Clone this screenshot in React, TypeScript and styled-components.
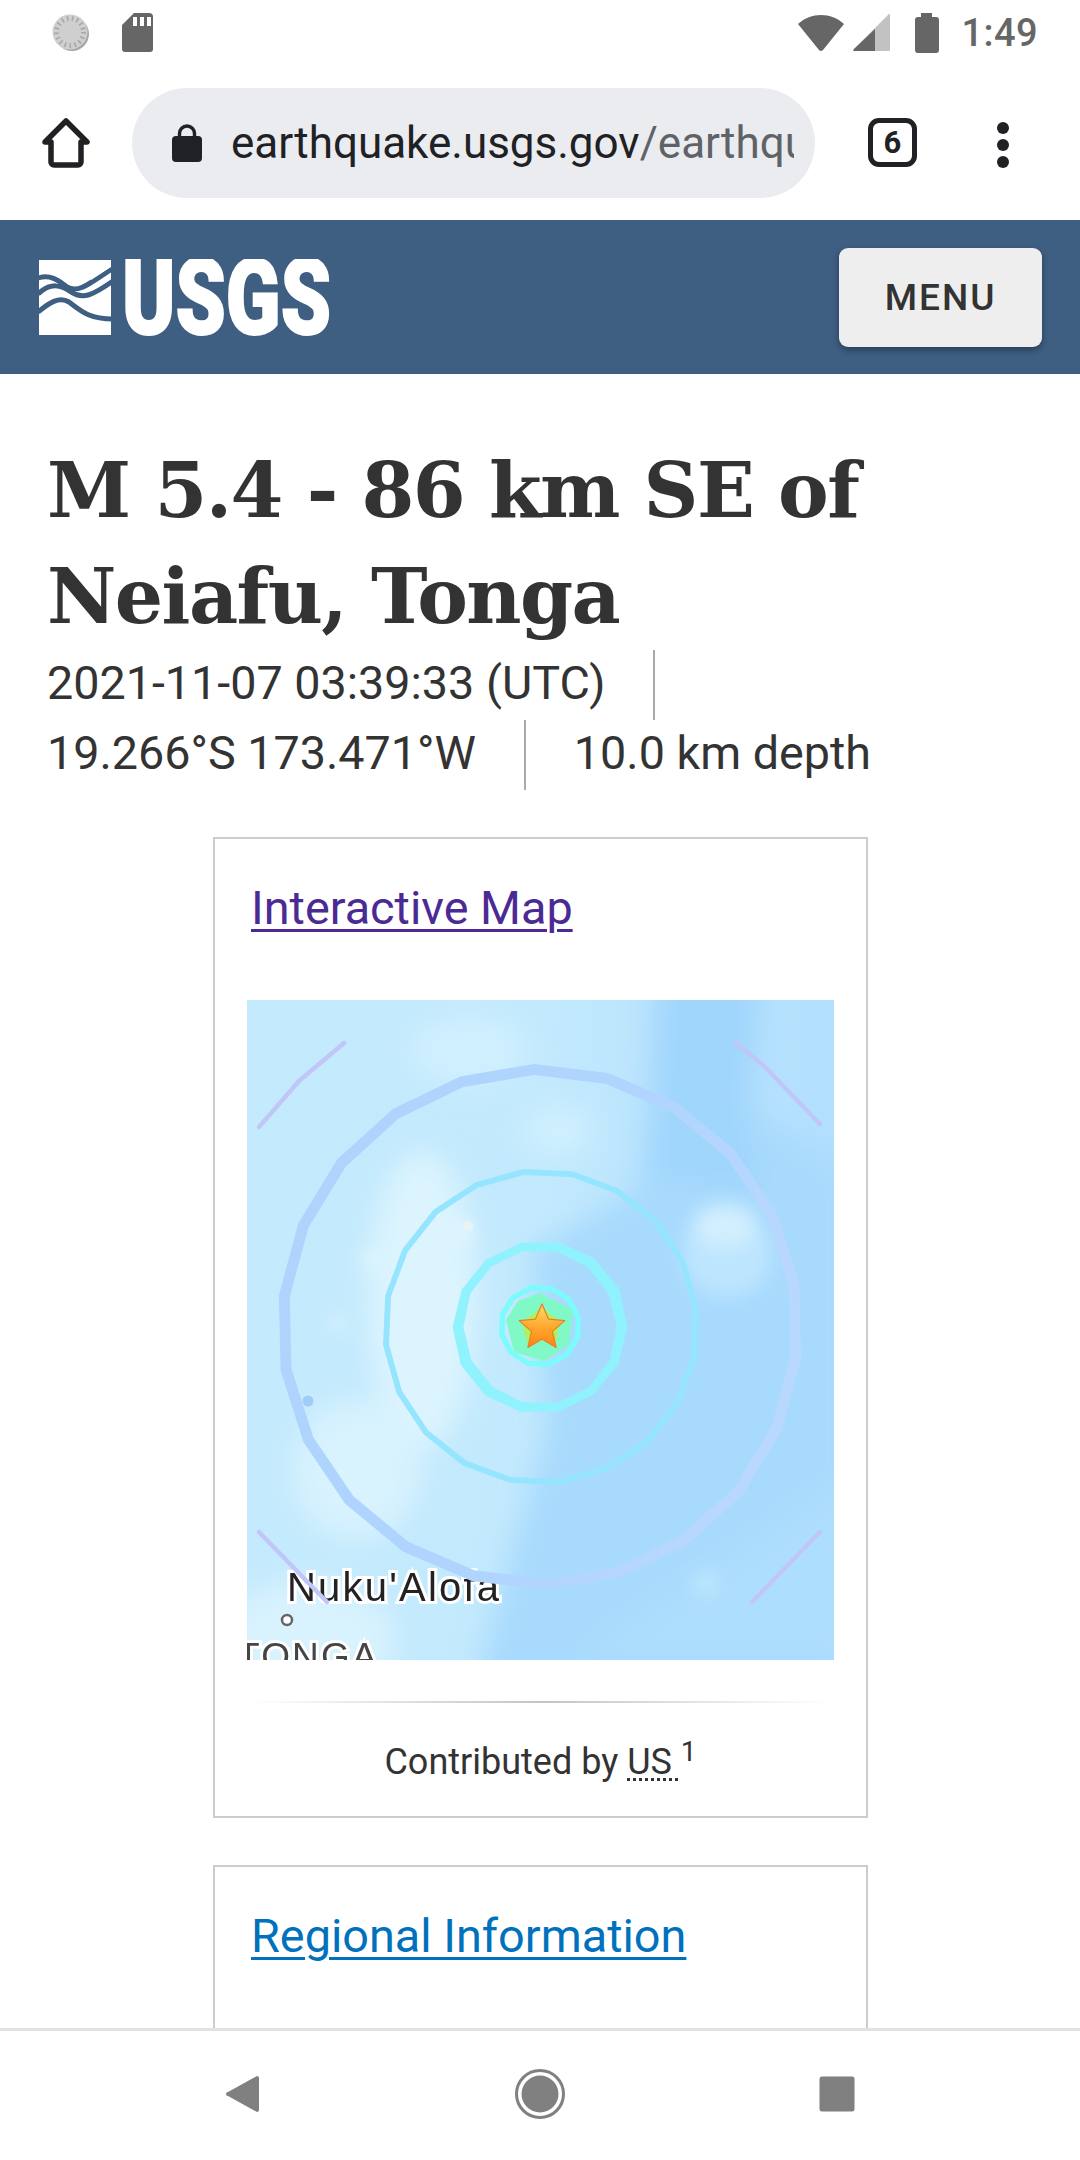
import React from "react";
import styled, { createGlobalStyle } from "styled-components";

const GlobalStyle = createGlobalStyle`
  html, body {
    margin: 0;
    padding: 0;
    background: #fff;
  }
  * {
    box-sizing: border-box;
  }
`;

// polygon ring with a thickness that changes round the circle, like the blurry shakemap contours
const ringPath = (
  cx: number,
  cy: number,
  r: number,
  width: number,
  sides: number,
  rot: number,
  taper = 0
) => {
  const pts = (rad: number, extra: number) =>
    Array.from({ length: sides }, (_, i) => {
      const a = rot + (i / sides) * Math.PI * 2;
      const rr = rad + extra * Math.cos(a * 2 + 1);
      return `${(cx + rr * Math.cos(a)).toFixed(1)} ${(cy + rr * Math.sin(a)).toFixed(1)}`;
    });
  const outer = pts(r, taper);
  const inner = pts(r - width, -taper);
  return `M${outer.join("L")}Z M${inner.join("L")}Z`;
};

const starPoints = (cx: number, cy: number, r: number) =>
  Array.from({ length: 10 }, (_, i) => {
    const a = -Math.PI / 2 + (i * Math.PI) / 5;
    const rr = i % 2 === 0 ? r : r * 0.46;
    return `${(cx + rr * Math.cos(a)).toFixed(1)},${(cy + rr * Math.sin(a)).toFixed(1)}`;
  }).join(" ");

const App = () => {
  return (
    <Phone>
      <GlobalStyle />
      <StatusBar>
        <StatusGroup>
          <svg width="38" height="40" viewBox="0 0 38 40">
            <circle cx="20" cy="21" r="17" fill="#8a8a8a" opacity="0.75" />
            <circle cx="18" cy="19" r="17.5" fill="#cfcfcf" />
            <circle cx="18" cy="19" r="13.5" fill="none" stroke="#a8a8a8" strokeWidth="5" strokeDasharray="1.6 3.4" />
            <circle cx="18" cy="19" r="10.5" fill="#cfcfcf" />
          </svg>
          <svg width="32" height="40" viewBox="0 0 32 40">
            <path
              d="M13 0H28a4 4 0 0 1 4 4V36a3 3 0 0 1-3 3H4a3 3 0 0 1-3-3V12Z"
              fill="#666"
            />
            <path d="M12 4h4v9h-4zM19 4h4v9h-4zM26 4h4v9h-4z" fill="#fff" />
          </svg>
        </StatusGroup>
        <StatusGroup $right>
          <svg width="48" height="40" viewBox="0 0 48 40">
            <path d="M1 11C14 -1 34 -1 47 11L26 37a3 3 0 0 1-4 0Z" fill="#666" />
          </svg>
          <SignalIcon width="38" height="40" viewBox="0 0 38 40">
            <path d="M37 2V37a1 1 0 0 1-1 1H2a1 1 0 0 1-1-2L35 2a1 1 0 0 1 2 0Z" fill="#c2c2c2" />
            <path d="M22 16V38H2a1 1 0 0 1-1-2Z" fill="#666" />
          </SignalIcon>
          <svg width="24" height="40" viewBox="0 0 24 40">
            <path d="M6 0h11v4h4a3 3 0 0 1 3 3V37a3 3 0 0 1-3 3H3a3 3 0 0 1-3-3V7a3 3 0 0 1 3-3h3Z" fill="#666" />
          </svg>
          <Clock>1:49</Clock>
        </StatusGroup>
      </StatusBar>

      <Toolbar>
        <svg width="52" height="52" viewBox="0 0 52 52">
          <path
            d="M26 4L47 25H41V45a3 3 0 0 1-3 3H14a3 3 0 0 1-3-3V25H5Z"
            fill="none"
            stroke="#202124"
            strokeWidth="5.5"
            strokeLinejoin="round"
          />
        </svg>
        <AddressBar>
          <svg width="30" height="40" viewBox="0 0 30 40">
            <path d="M7.5 16V10.5a7.5 7.5 0 0 1 15 0V16" fill="none" stroke="#202124" strokeWidth="3.4" />
            <rect x="0" y="13" width="30" height="26" rx="4" fill="#202124" />
          </svg>
          <Url>
            earthquake.usgs.gov<UrlPath>/earthquakes</UrlPath>
          </Url>
        </AddressBar>
        <TabCount>6</TabCount>
        <MenuDots>
          <i />
          <i />
          <i />
        </MenuDots>
      </Toolbar>

      <SiteHeader>
        <Logo width="295" height="78" viewBox="0 0 295 78">
          <rect x="0" y="1" width="72" height="75" fill="#fff" />
          <g fill="none" stroke="#3e5e82" strokeWidth="5">
            <path d="M-1 19C12 15 20 22 28 28C38 34 46 28 74 9" />
            <path d="M-1 35C12 23 22 26 32 33C44 41 54 36 74 22" />
            <path d="M-1 53C10 44 20 37 30 43C42 52 50 60 74 60" />
          </g>
          <path d="M72 1V8L52 21V1Z" fill="#fff" />
          <LogoWord x="83" y="75" textLength="209" lengthAdjust="spacingAndGlyphs">
            USGS
          </LogoWord>
        </Logo>
        <MenuButton>MENU</MenuButton>
      </SiteHeader>

      <Content>
        <Title>
          M 5.4 - 86 km SE of
          <br />
          Neiafu, Tonga
        </Title>
        <Meta>
          <MetaItem $divider>2021-11-07 03:39:33 (UTC)</MetaItem>
          <MetaItem $divider>19.266°S 173.471°W</MetaItem>
          <MetaItem>10.0 km depth</MetaItem>
        </Meta>

        <Card>
          <CardLink href="#" $visited>
            Interactive Map
          </CardLink>
          <MapFigure viewBox="0 0 587 660" width="587" height="660">
            <defs>
              <linearGradient id="sea" x1="0" x2="1" y1="0" y2="0">
                <stop offset="0" stopColor="#c4eafd" />
                <stop offset="0.5" stopColor="#c2e9fd" />
                <stop offset="1" stopColor="#b2dffd" />
              </linearGradient>
              <linearGradient id="outerRing" x1="0" x2="1" y1="0.2" y2="0.5">
                <stop offset="0" stopColor="#aed3fd" />
                <stop offset="0.55" stopColor="#afd4fe" />
                <stop offset="1" stopColor="#b9d8fe" />
              </linearGradient>
              <linearGradient id="starFill" x1="0" x2="0" y1="0" y2="1">
                <stop offset="0" stopColor="#ffdb6a" />
                <stop offset="0.55" stopColor="#ffa62e" />
                <stop offset="1" stopColor="#ff8414" />
              </linearGradient>
              <filter id="soft" x="-30%" y="-30%" width="160%" height="160%">
                <feGaussianBlur stdDeviation="14" />
              </filter>
              <filter id="softSmall" x="-30%" y="-30%" width="160%" height="160%">
                <feGaussianBlur stdDeviation="9" />
              </filter>
              <filter id="fuzzy">
                <feGaussianBlur stdDeviation="0.7" />
              </filter>
            </defs>
            <rect width="587" height="660" fill="url(#sea)" />
            <g filter="url(#soft)">
              <path d="M405 -30H515L505 110 600 170V700H225L262 560 300 430 285 250 390 190 400 100Z" fill="#a8dafd" />
              <path d="M420 -30H510L500 130 520 190 405 180Z" fill="#a0d5fc" />
              <path d="M330 660H600V480L480 560Z" fill="#aedefd" />
              <ellipse cx="175" cy="300" rx="55" ry="150" fill="#dcf4fe" />
              <ellipse cx="110" cy="470" rx="65" ry="70" fill="#d8f2fe" />
              <ellipse cx="60" cy="640" rx="90" ry="60" fill="#d8f2fe" />
              <ellipse cx="220" cy="50" rx="60" ry="35" fill="#d0f0fe" />
              <ellipse cx="310" cy="130" rx="35" ry="25" fill="#d0f0fe" />
            </g>
            <g filter="url(#softSmall)">
              <ellipse cx="480" cy="255" rx="45" ry="42" fill="#bde5fe" />
              <ellipse cx="478" cy="226" rx="32" ry="22" fill="#d2effe" />
              <circle cx="458" cy="583" r="11" fill="#c0eafd" />
              <circle cx="90" cy="323" r="7" fill="#e4f7fe" />
              <circle cx="125" cy="260" r="10" fill="#e0f5fe" />
              <circle cx="215" cy="232" r="9" fill="#e8f8ff" />
            </g>
            <circle cx="221" cy="226" r="5" fill="#e8f4f4" filter="url(#fuzzy)" />
            <circle cx="61" cy="401" r="5.5" fill="#9fcdf6" filter="url(#fuzzy)" />

            <g filter="url(#fuzzy)">
              <MapLabel x="40" y="601" fontSize="40">
                Nuku'Alofa
              </MapLabel>
              <MapLabel x="-10" y="669" fontSize="37" $dim>
                TONGA
              </MapLabel>
              <circle cx="40" cy="620" r="5" fill="#fff" stroke="#666" strokeWidth="2.5" />
            </g>

            <g fill="none" stroke="#c1c6f9" strokeWidth="4.5" strokeLinecap="round" strokeLinejoin="round" filter="url(#fuzzy)">
              <path d="M12 127L52 81L97 43" />
              <path d="M489 43L517 66L573 124" />
              <path d="M12 532L80 602" />
              <path d="M505 602L573 532" />
            </g>

            <g fillRule="evenodd" filter="url(#fuzzy)">
              <path d={ringPath(293, 327, 263, 11, 22, 0.12, 0)} fill="url(#outerRing)" />
              <path d={ringPath(294, 327, 159, 6, 20, 0.2, 0)} fill="#96e5fe" />
              <path d={ringPath(293, 327, 87, 10, 14, 0, 0.8)} fill="#8ff2fc" />
              <path d="M293 293L326 310L322 345L297 361L267 352L259 320L271 301Z" fill="#80f9c6" />
              <path d="M294 308L312 320L310 340L280 342L275 322Z" fill="#b0f060" />
              <path d={ringPath(293, 326, 42, 5.5, 12, 0.3, 0)} fill="#7cfbfd" />
            </g>
            <polygon
              points={starPoints(295, 328, 24)}
              fill="url(#starFill)"
              stroke="#e8811e"
              strokeWidth="1.2"
              strokeLinejoin="round"
            />
          </MapFigure>
          <Rule />
          <Credit>
            Contributed by <Abbr>US&nbsp;</Abbr>
            <Sup>1</Sup>
          </Credit>
        </Card>

        <Card>
          <CardLink href="#">Regional Information</CardLink>
        </Card>
      </Content>

      <NavBar>
        <svg width="34" height="38" viewBox="0 0 34 38">
          <path d="M31 1a2 2 0 0 1 2 2V35a2 2 0 0 1-2 2L2 21a2 2 0 0 1 0-4Z" fill="#808080" />
        </svg>
        <svg width="50" height="50" viewBox="0 0 50 50">
          <circle cx="25" cy="25" r="23.5" fill="none" stroke="#808080" strokeWidth="3" />
          <circle cx="25" cy="25" r="18.5" fill="#808080" />
        </svg>
        <svg width="36" height="36" viewBox="0 0 36 36">
          <rect x="0.5" y="0.5" width="35" height="35" rx="2.5" fill="#808080" />
        </svg>
      </NavBar>
    </Phone>
  );
};

export default App;

const Phone = styled.div`
  width: 1080px;
  height: 2160px;
  display: flex;
  flex-direction: column;
  overflow: hidden;
  background: #fff;
  font-family: Roboto, "Liberation Sans", sans-serif;
`;

const StatusBar = styled.div`
  height: 88px;
  flex: none;
  display: flex;
  justify-content: space-between;
  padding: 13px 42px 0 52px;
`;

const StatusGroup = styled.div<{ $right?: boolean }>`
  display: flex;
  align-items: flex-start;
  gap: ${(p) => (p.$right ? "8px" : "31px")};
  svg {
    display: block;
  }
`;

const SignalIcon = styled.svg`
  margin-right: 16px;
`;

const Clock = styled.span`
  margin-left: 15px;
  font-size: 38px;
  line-height: 40px;
  font-weight: 500;
  letter-spacing: 0.4px;
  color: #666;
`;

const Toolbar = styled.div`
  height: 132px;
  flex: none;
  display: flex;
  align-items: flex-start;
  padding-left: 40px;
  > svg {
    margin-top: 29px;
  }
`;

const AddressBar = styled.div`
  width: 683px;
  height: 110px;
  margin-left: 40px;
  padding: 0 21px 0 40px;
  display: flex;
  align-items: center;
  gap: 29px;
  border-radius: 55px;
  background: #ebecf0;
  svg {
    flex: none;
  }
`;

const Url = styled.div`
  flex: 1;
  overflow: hidden;
  white-space: nowrap;
  font-size: 44px;
  line-height: 58px;
  color: #202124;
`;

const UrlPath = styled.span`
  color: #5f6368;
`;

const TabCount = styled.div`
  width: 49px;
  height: 49px;
  margin: 30px 0 0 53px;
  display: flex;
  align-items: center;
  justify-content: center;
  border: 5px solid #202124;
  border-radius: 11px;
  font-family: "Liberation Sans Narrow", Roboto, sans-serif;
  font-size: 31px;
  font-weight: 700;
  color: #202124;
`;

const MenuDots = styled.div`
  margin: 34px 0 0 80px;
  display: flex;
  flex-direction: column;
  gap: 5px;
  i {
    display: block;
    width: 12px;
    height: 12px;
    border-radius: 50%;
    background: #202124;
  }
`;

const SiteHeader = styled.header`
  height: 154px;
  flex: none;
  display: flex;
  align-items: flex-start;
  justify-content: space-between;
  padding: 28px 38px 0 39px;
  background: #3e5e82;
`;

const Logo = styled.svg`
  display: block;
  margin-top: 11px;
`;

const LogoWord = styled.text`
  font-family: Roboto, "Liberation Sans", sans-serif;
  font-size: 105px;
  font-weight: 900;
  fill: #fff;
  stroke: #fff;
  stroke-width: 2px;
`;

const MenuButton = styled.button`
  width: 203px;
  height: 99px;
  padding: 0;
  border: none;
  border-radius: 9px;
  background: #eee;
  box-shadow: 0 3px 6px rgba(0, 0, 0, 0.35);
  font-family: Roboto, "Liberation Sans", sans-serif;
  font-size: 37px;
  font-weight: 500;
  letter-spacing: 2px;
  color: #333;
`;

const Content = styled.main`
  flex: 1;
  min-height: 0;
  overflow: hidden;
  padding: 0 47px;
`;

const Title = styled.h1`
  margin: 64px 0 0;
  font-family: "DejaVu Serif", "Liberation Serif", serif;
  font-size: 76px;
  line-height: 106px;
  font-weight: 700;
  letter-spacing: -1.6px;
  color: #333;
`;

const Meta = styled.div`
  display: flex;
  flex-wrap: wrap;
`;

const MetaItem = styled.div<{ $divider?: boolean }>`
  height: 70px;
  font-size: 46.7px;
  line-height: 66px;
  color: #333;
  padding-right: ${(p) => (p.$divider ? "48px" : "0")};
  margin-right: ${(p) => (p.$divider ? "48px" : "0")};
  border-right: ${(p) => (p.$divider ? "2px solid #aaa" : "none")};
`;

const Card = styled.section`
  width: 655px;
  margin: 47px 0 0 166px;
  padding: 41px 0 0;
  border: 2px solid #ccc;
  &:last-child {
    min-height: 300px;
  }
`;

const CardLink = styled.a<{ $visited?: boolean }>`
  display: block;
  margin-left: 36px;
  font-size: 46.8px;
  line-height: 56px;
  text-decoration: underline;
  text-decoration-thickness: 3px;
  text-underline-offset: 5px;
  color: ${(p) => (p.$visited ? "#4b2a93" : "#0071bc")};
`;

const MapFigure = styled.svg`
  display: block;
  margin: 64px auto 0;
`;

const MapLabel = styled.text<{ $dim?: boolean }>`
  font-family: "Liberation Sans", sans-serif;
  letter-spacing: 2.2px;
  fill: ${(p) => (p.$dim ? "#444" : "#222")};
  stroke: #fff;
  stroke-width: 6px;
  paint-order: stroke;
`;

const Rule = styled.div`
  height: 2px;
  margin: 41px 36px 0;
  background: linear-gradient(to right, rgba(0, 0, 0, 0), #c4c4c4 50%, rgba(0, 0, 0, 0));
`;

const Credit = styled.div`
  margin: 29px 0 0;
  padding-bottom: 24px;
  text-align: center;
  font-size: 36px;
  line-height: 60px;
  color: #333;
`;

const Abbr = styled.abbr`
  text-decoration: underline dotted;
  text-decoration-thickness: 3px;
  text-underline-offset: 4px;
`;

const Sup = styled.sup`
  font-size: 28px;
  line-height: 0;
`;

const NavBar = styled.nav`
  height: 132px;
  flex: none;
  display: flex;
  align-items: center;
  justify-content: space-between;
  padding: 0 225px 4px 226px;
  border-top: 3px solid #e2e2e2;
  background: #fff;
`;
